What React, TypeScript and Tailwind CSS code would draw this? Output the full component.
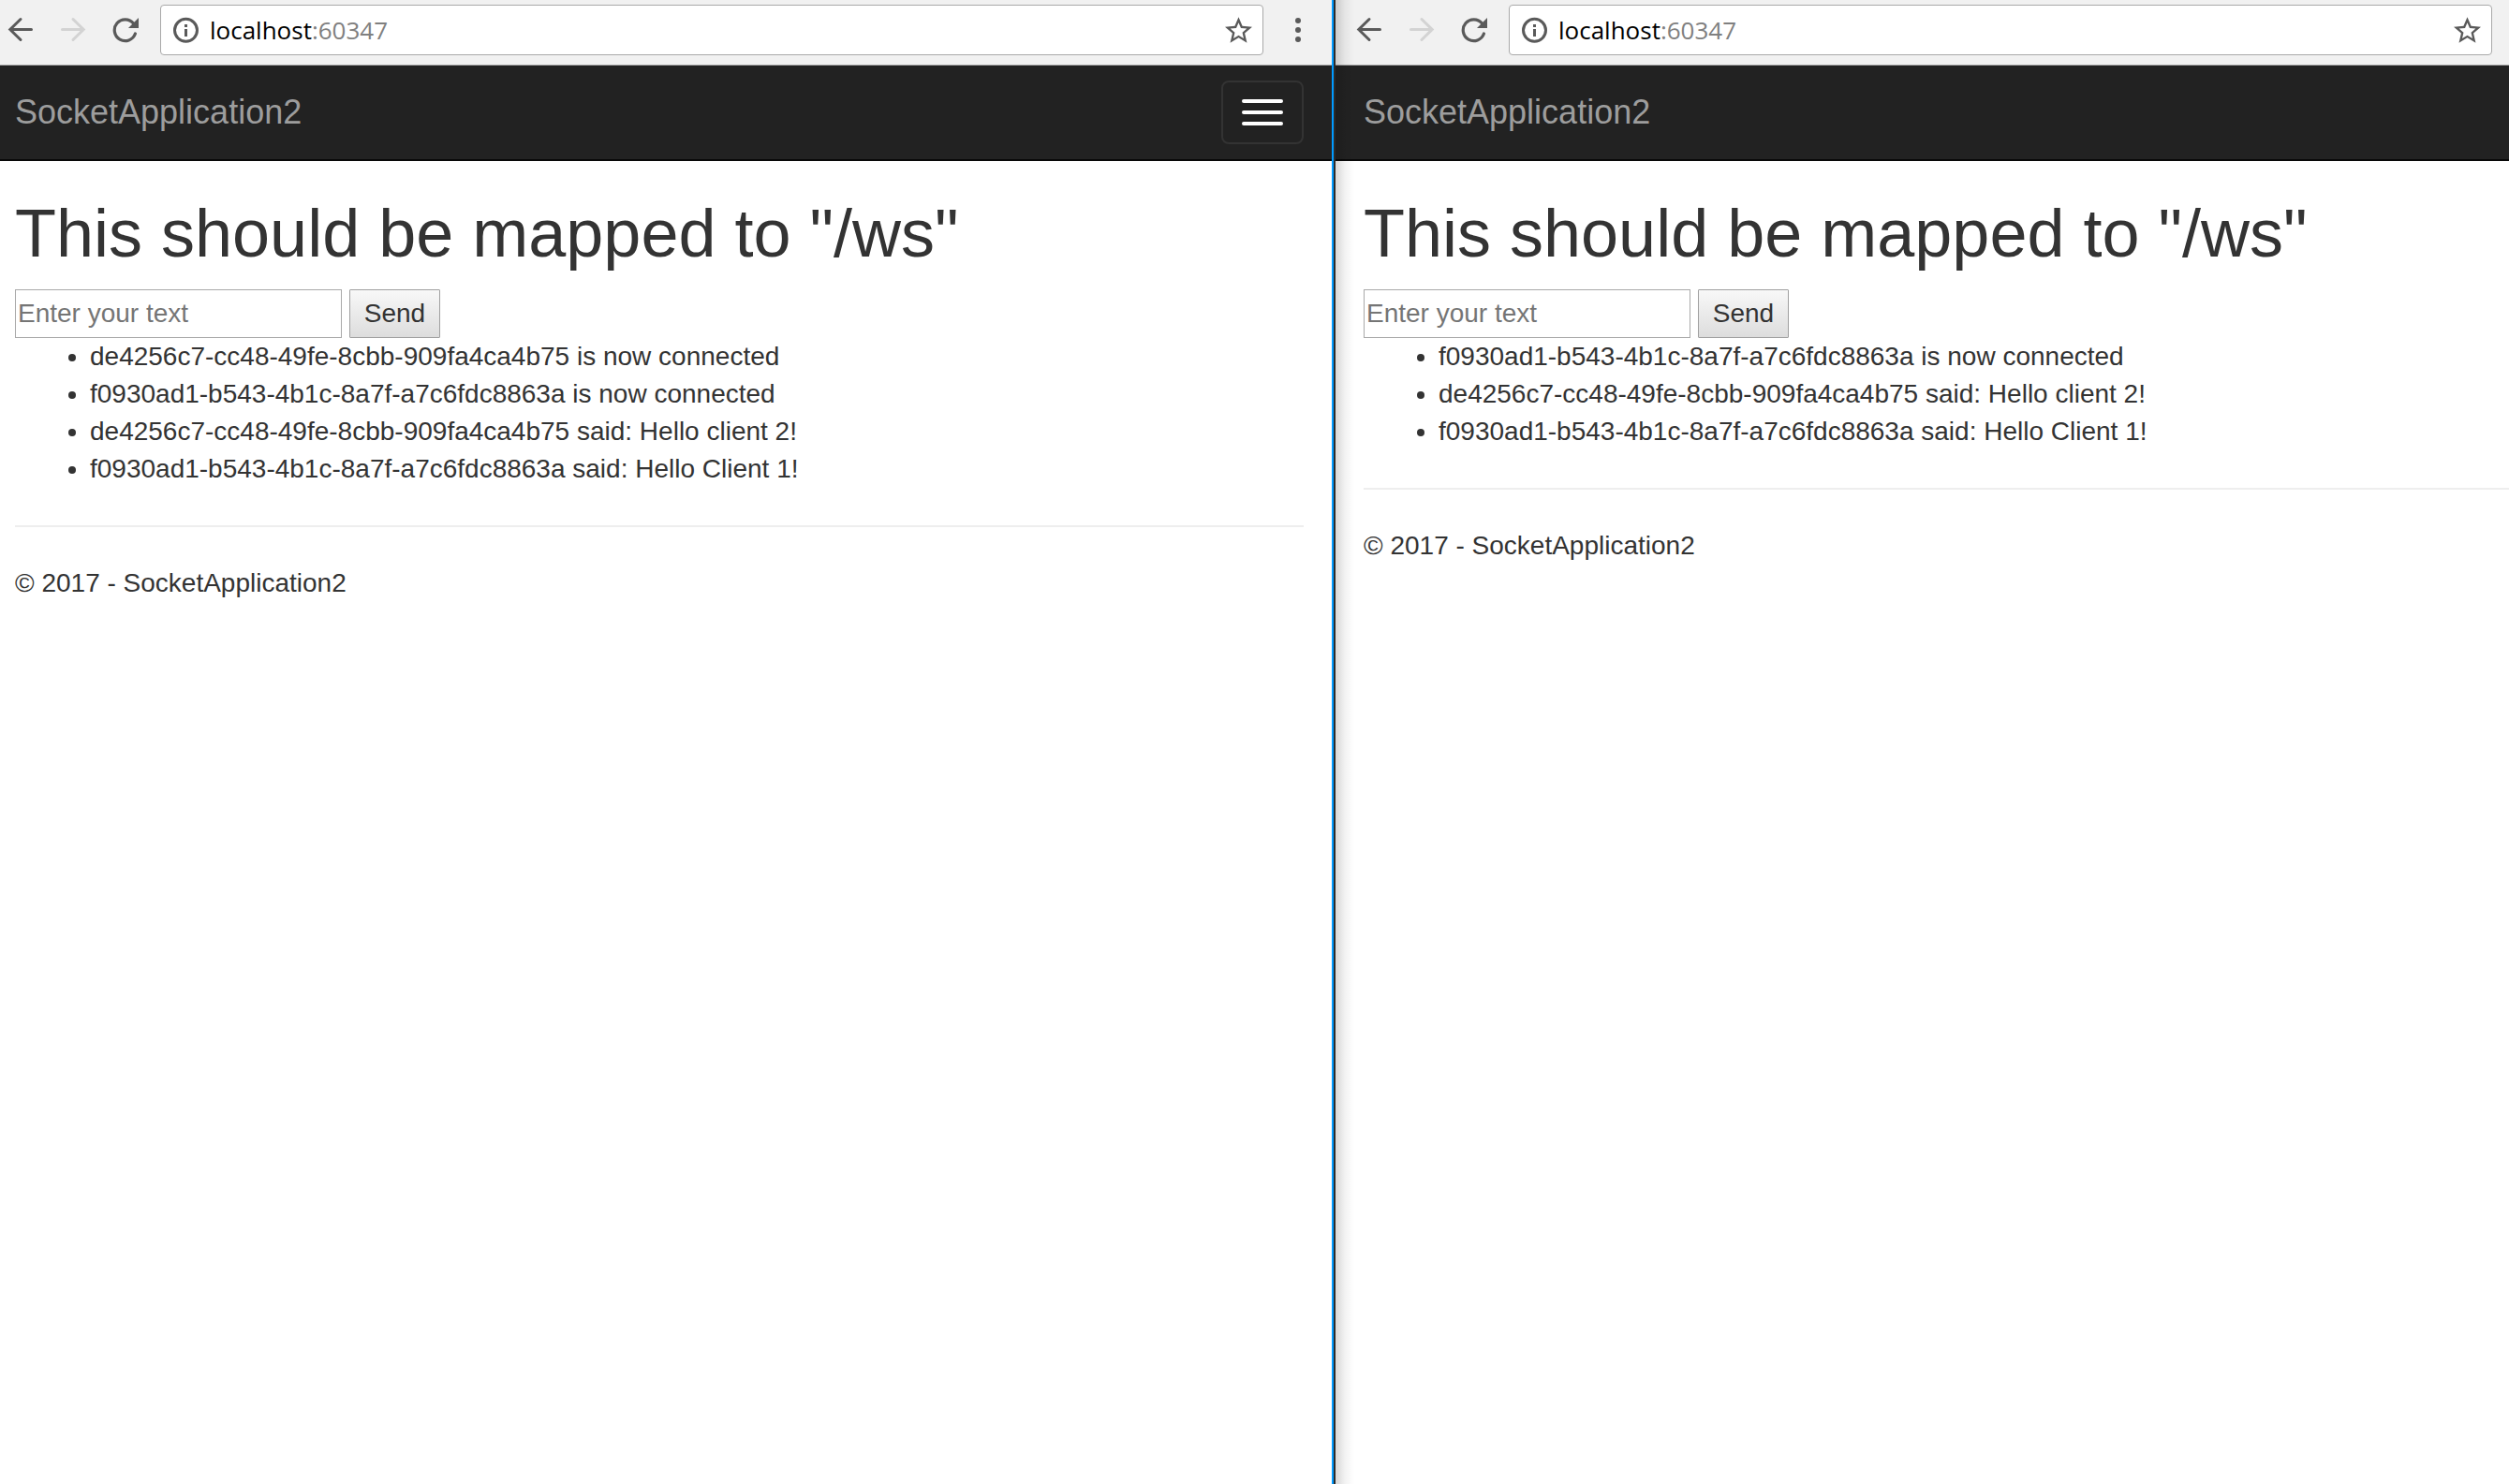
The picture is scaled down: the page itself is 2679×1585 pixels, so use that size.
import { useState } from "react";
import clsx from "clsx";

const FIRST = "de4256c7-cc48-49fe-8cbb-909fa4ca4b75";
const SECOND = "f0930ad1-b543-4b1c-8a7f-a7c6fdc8863a";

function ArrowIcon({ forward = false }: { forward?: boolean }) {
  return (
    <svg
      viewBox="0 0 28 28"
      className={clsx("size-7", forward ? "text-[#d3d3d3]" : "text-[#5a5a5a]")}
      fill="none"
      stroke="currentColor"
      strokeWidth="3"
      strokeLinecap="round"
      aria-hidden="true"
    >
      {forward ? (
        <path d="M2.5 13.5H25M14 2.5L25.2 13.5L14 24.5" />
      ) : (
        <path d="M25.5 13.5H3M14 2.5L2.8 13.5L14 24.5" />
      )}
    </svg>
  );
}

function ReloadIcon() {
  return (
    <svg viewBox="0 0 28 28" className="size-7 text-[#5a5a5a]" aria-hidden="true">
      <path
        d="M22.5 7A11.4 11.4 0 1 0 24.4 18"
        fill="none"
        stroke="currentColor"
        strokeWidth="3.2"
        strokeLinecap="round"
      />
      <path d="M28 1V12H17Z" fill="currentColor" />
    </svg>
  );
}

function InfoIcon() {
  return (
    <svg viewBox="0 0 28 28" className="size-7 shrink-0 text-[#5a5a5a]" aria-hidden="true">
      <circle cx="14.5" cy="14.3" r="12" fill="none" stroke="currentColor" strokeWidth="3" />
      <path d="M13 8h3v3h-3zM13 13h3v8h-3z" fill="currentColor" />
    </svg>
  );
}

function StarIcon() {
  return (
    <svg viewBox="2 2 20 19" className="h-7 w-[29px] text-[#5a5a5a]" aria-hidden="true">
      <path
        fill="currentColor"
        d="M22 9.24l-7.19-.62L12 2 9.19 8.63 2 9.24l5.46 4.73L5.82 21 12 17.27 18.18 21l-1.63-7.03L22 9.24zM12 15.4l-3.76 2.27 1-4.28-3.32-2.88 4.38-.38L12 6.1l1.71 4.04 4.38.38-3.32 2.88 1 4.28L12 15.4z"
      />
    </svg>
  );
}

function MenuDots() {
  return (
    <svg viewBox="0 0 6 28" className="h-7 w-1.5 fill-[#5a5a5a]" aria-hidden="true">
      <circle cx="3" cy="4" r="3" />
      <circle cx="3" cy="14" r="3" />
      <circle cx="3" cy="24" r="3" />
    </svg>
  );
}

type PaneProps = {
  side: "left" | "right";
  messages: string[];
};

function BrowserPane({ side, messages }: PaneProps) {
  const left = side === "left";
  const [text, setText] = useState("");

  return (
    <section className="relative min-w-0 overflow-hidden bg-white">
      <div
        className={clsx(
          "flex h-[70px] items-start border-b border-[#a9a9a9] bg-[#f1f1f1] pt-[5px]",
          left ? "pr-[33px] pl-2" : "pr-[18px] pl-[22px]",
        )}
      >
        <div className="flex h-[54px] items-center gap-7 pr-[23px]">
          <button type="button" aria-label="Back">
            <ArrowIcon />
          </button>
          <button type="button" aria-label="Forward">
            <ArrowIcon forward />
          </button>
          <button type="button" aria-label="Reload">
            <ReloadIcon />
          </button>
        </div>
        <div className="flex h-[54px] min-w-0 flex-1 items-center rounded-[4px] border border-[#a9a9a9] bg-white pr-[11px] pl-3">
          <InfoIcon />
          <p className="flex-1 pl-3 font-['Open_Sans','Noto_Sans',sans-serif] text-[26px] leading-8 text-[#808080]">
            <span className="text-black">localhost</span>:60347
          </p>
          <button type="button" aria-label="Bookmark this page">
            <StarIcon />
          </button>
        </div>
        {left && (
          <button type="button" aria-label="Browser menu" className="flex h-[54px] items-center pl-[34px]">
            <MenuDots />
          </button>
        )}
      </div>

      <nav
        className={clsx(
          "flex h-[102px] items-center justify-between border-b-2 border-[#080808] bg-[#222222] pr-[30px]",
          left ? "pl-4" : "pl-[30px]",
        )}
      >
        <a href="#" className="text-4xl leading-10 text-[#9d9d9d]">
          SocketApplication2
        </a>
        {left && (
          <button
            type="button"
            aria-label="Toggle navigation"
            className="flex h-[68px] w-[88px] flex-col items-center justify-center gap-2 rounded-lg border-2 border-[#333333]"
          >
            <span className="h-1 w-11 rounded-[2px] bg-white" />
            <span className="h-1 w-11 rounded-[2px] bg-white" />
            <span className="h-1 w-11 rounded-[2px] bg-white" />
          </button>
        )}
      </nav>

      <main className={clsx("pt-[38px]", left ? "pr-[30px] pl-4" : "pl-[30px]")}>
        <h1 className="text-7xl leading-[79px]">This should be mapped to "/ws"</h1>
        <form className="mt-5 flex gap-2" onSubmit={(e) => e.preventDefault()}>
          <input
            type="text"
            aria-label="Message"
            value={text}
            onChange={(e) => setText(e.target.value)}
            placeholder="Enter your text"
            className="h-[52px] w-[349px] border border-[#a9a9a9] bg-white px-0.5 text-[28px] placeholder:text-[#757575]"
          />
          <button
            type="submit"
            className="h-[52px] w-[97px] rounded-[1px] border border-[#a0a0a0] bg-linear-to-b from-[#f8f8f8] to-[#dddddd] text-[28px] leading-10"
          >
            Send
          </button>
        </form>
        <ul className="list-disc pl-20 text-[28px] leading-10">
          {messages.map((message) => (
            <li key={message}>{message}</li>
          ))}
        </ul>
        <hr className="my-10 border-t-2 border-[#eeeeee]" />
        <footer>
          <p className="text-[28px] leading-10">© 2017 - SocketApplication2</p>
        </footer>
      </main>

      {!left && (
        <div className="pointer-events-none absolute inset-y-0 left-0 w-5 bg-linear-to-r from-black/16 via-black/5 to-transparent" />
      )}
    </section>
  );
}

export default function App() {
  return (
    <div className="grid min-h-screen grid-cols-[minmax(0,1422fr)_4px_minmax(0,1253fr)] bg-white font-['Liberation_Sans',Arial,sans-serif] text-[#333333]">
      <BrowserPane
        side="left"
        messages={[
          `${FIRST} is now connected`,
          `${SECOND} is now connected`,
          `${FIRST} said: Hello client 2!`,
          `${SECOND} said: Hello Client 1!`,
        ]}
      />
      <div className="border-r-2 border-[#2b2b2b] bg-[#009aff]" />
      <BrowserPane
        side="right"
        messages={[
          `${SECOND} is now connected`,
          `${FIRST} said: Hello client 2!`,
          `${SECOND} said: Hello Client 1!`,
        ]}
      />
    </div>
  );
}
